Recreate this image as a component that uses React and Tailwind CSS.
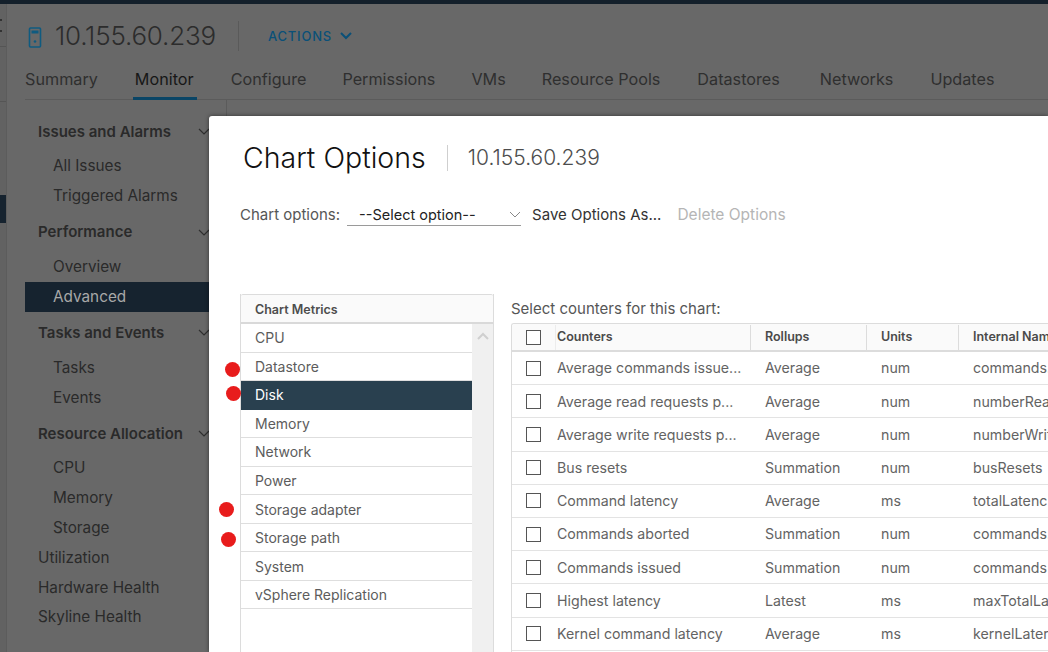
const tabs = [["Summary",false,"mr-[37px]"],["Monitor",true,"mr-[37px]"],["Configure",false,"mr-[36px]"],["Permissions",false,"mr-[36px]"],["VMs",false,"mr-[36px]"],["Resource Pools",false,"mr-[37px]"],["Datastores",false,"mr-[40px]"],["Networks",false,"mr-[37px]"],["Updates",false,"mr-[37px]"]];
const nav = [
  ["h","Issues and Alarms",1],["i","All Issues"],["i","Triggered Alarms"],
  ["h","Performance",1],["i","Overview"],["a","Advanced"],
  ["h","Tasks and Events",1],["i","Tasks"],["i","Events"],
  ["h","Resource Allocation",1],["i","CPU"],["i","Memory"],["i","Storage"],
  ["t","Utilization"],["t","Hardware Health"],["t","Skyline Health"],
];
const metrics = ["CPU","Datastore","Disk","Memory","Network","Power","Storage adapter","Storage path","System","vSphere Replication"];
const rows = [
  ["Average commands issue...","Average","num","commands."],
  ["Average read requests p...","Average","num","numberRea"],
  ["Average write requests p...","Average","num","numberWrit"],
  ["Bus resets","Summation","num","busResets"],
  ["Command latency","Average","ms","totalLatenc"],
  ["Commands aborted","Summation","num","commands."],
  ["Commands issued","Summation","num","commands"],
  ["Highest latency","Latest","ms","maxTotalLa"],
  ["Kernel command latency","Average","ms","kernelLater"],
];
const Chevron = ({c="#2f2f2f", w=1.2}) => (
  <svg width="12" height="8" viewBox="0 0 12 8" fill="none" stroke={c} strokeWidth={w}><path d="M1 1l5 5 5-5"/></svg>
);
const Dot = ({className}) => <span className={"absolute w-[15px] h-[15px] rounded-full bg-[#e81c1c] " + className}></span>;
const Box = () => <span className="w-[15px] h-[15px] border border-[#555] bg-white shrink-0"></span>;

export default function App() {
  return (
    <div className="relative w-[1048px] h-[652px] overflow-hidden bg-[#686868] text-[#2b2b2b] font-['Inter','Liberation_Sans',sans-serif] flex flex-col">
      <div className="h-[4px] bg-[#14202b] shrink-0"></div>
      <div className="flex flex-1 min-h-0">
        <div className="w-[7px] shrink-0 bg-[#626262] border-r border-[#5c5c5c] flex flex-col">
          <div className="h-[43px] border-b border-[#555] flex flex-col gap-[9px] pt-[15px]">
            <span className="w-[2px] h-[2px] bg-[#333]"></span>
            <span className="w-[2px] h-[2px] bg-[#333]"></span>
          </div>
          <div className="h-[55px] border-b border-[#555]"></div>
          <div className="h-[28px] mt-[93px] bg-[#16232f]"></div>
        </div>
        <div className="flex-1 min-w-0 flex flex-col pl-[18px]">
          <div className="flex items-center h-[64px] shrink-0">
            <svg width="14" height="21" viewBox="0 0 14 21" fill="none" className="ml-[3px] mt-[3px]">
              <rect x="1.5" y="1" width="11" height="19" rx="1" stroke="#0f5b80" strokeWidth="1.6"/>
              <rect x="3.5" y="3.5" width="7" height="3" fill="#0f5b80"/>
              <circle cx="7" cy="14.5" r="1.3" fill="#0f5b80"/>
            </svg>
            <span className="ml-[13px] text-[26px] leading-none font-light tracking-[-0.2px] text-[#2c2c2c]">10.155.60.239</span>
            <span className="ml-[22px] w-px h-[30px] bg-[#5a5a5a]"></span>
            <span className="ml-[29px] mt-[1px] text-[13px] font-medium tracking-[0.8px] text-[#0a5078]">ACTIONS</span>
            <span className="ml-[8px]"><Chevron c="#0a5078" w={2}/></span>
          </div>
          <div className="flex items-start h-[32px] border-b border-[#5b5b5b] shrink-0">
            {tabs.map(([t,a,m]) => (
              <span key={t} className={"relative text-[16.2px] leading-[22px] h-[32px] " + m + " " + (a ? "text-[#171717]" : "text-[#2f2f2f]")}>
                {t}
                {a && <span className="absolute left-[-2px] right-[-3px] bottom-[0px] h-[3px] bg-[#0a4566]"></span>}
              </span>
            ))}
          </div>
          <div className="flex flex-col w-[202px] pt-[11px] flex-1 border-r border-[#5b5b5b]">
            {nav.map(([k,t,c]) => k==="a" ? (
              <div key={t} className="h-[30px] shrink-0 bg-[#16232f] text-[#a8a8a8] text-[15.3px] pl-[28px] flex items-center">{t}</div>
            ) : k==="h" ? (
              <div key={t} className="h-[30px] shrink-0 mt-[6px] mb-[5px] flex items-center justify-between text-[15px] font-semibold text-[#2a2a2a] pl-[13px] pr-[16px]">
                <span>{t}</span>{c && <Chevron/>}
              </div>
            ) : (
              <div key={t} className={"h-[29.8px] shrink-0 flex items-center text-[15.3px] text-[#2a2a2a] " + (k==="t" ? "pl-[13px]" : "pl-[28px]")}>
                {t}
              </div>
            ))}
          </div>
        </div>
      </div>

      <div className="absolute left-[209px] top-[116px] w-[839px] h-[536px] bg-white rounded-tl-[3px] shadow-[0_0_4px_rgba(0,0,0,0.5)] flex flex-col">
        <div className="flex items-center h-[84px] pl-[34px] shrink-0">
          <span className="text-[28.5px] font-light text-[#111] leading-none">Chart Options</span>
          <span className="ml-[21px] w-px h-[26px] bg-[#cfcfcf]"></span>
          <span className="ml-[20px] text-[21px] font-light text-[#4d4d4d]">10.155.60.239</span>
        </div>
        <div className="flex items-center h-[28px] mt-[1px] pl-[31px] text-[15px] shrink-0">
          <span className="text-[#565656]">Chart options:</span>
          <span className="ml-[7px] w-[174px] h-[22px] border-b border-[#9a9a9a] flex items-center justify-between pl-[12px] text-[14.5px] text-[#222]">
            --Select option--<Chevron c="#888" w={1}/>
          </span>
          <span className="ml-[11px] text-[#333]">Save Options As...</span>
          <span className="ml-[16px] text-[15.5px] text-[#b5b5b5]">Delete Options</span>
        </div>
        <div className="flex pl-[31px] pt-[65px] flex-1 min-h-0">
          <div className="w-[254px] flex flex-col shrink-0 border-x border-[#dcdcdc]">
            <div className="h-[30px] bg-[#fafafa] border-t border-[#dcdcdc] border-b-[2px] border-b-[#d9d9d9] rounded-t-[2px] pl-[14px] pt-[3px] flex items-center text-[12.5px] font-semibold text-[#4d4d4d] shrink-0">Chart Metrics</div>
            <div className="flex flex-1 min-h-0">
              <div className="w-[231px] flex flex-col">
                {metrics.map((m) => (
                  <div key={m} className={"h-[28.55px] pl-[14px] flex items-center text-[14px] border-b shrink-0 " + (m==="Disk" ? "bg-[#29404f] text-white border-[#29404f]" : "text-[#5c5c5c] border-[#dedede]")}>{m}</div>
                ))}
              </div>
              <div className="flex-1 bg-[#f0f0f0] flex justify-center pt-[8px]">
                <svg width="12" height="8" viewBox="0 0 12 8" fill="none" stroke="#cfcfcf" strokeWidth="2"><path d="M1 7l5-5 5 5"/></svg>
              </div>
            </div>
          </div>
          <div className="ml-[17px] flex-1 min-w-0 flex flex-col">
            <div className="h-[29px] pt-[2px] flex items-center text-[15px] text-[#565656] shrink-0">Select counters for this chart:</div>
            <div className="border-l border-t border-[#dcdcdc] rounded-tl-[3px] flex-1 min-h-0 overflow-hidden">
              <div className="flex h-[28px] pt-[1px] bg-[#fafafa] border-b-[2px] border-[#dcdcdc] text-[12.5px] font-semibold text-[#4a4a4a] items-center">
                <span className="w-[44px] pl-[14px] flex items-center h-full border-r border-[#ececec] shrink-0"><Box/></span>
                <span className="w-[195px] shrink-0 h-full flex items-center border-r border-[#dcdcdc] pl-[1px]">Counters</span>
                <span className="w-[116px] shrink-0 h-full flex items-center pl-[14px] border-r border-[#dcdcdc]">Rollups</span>
                <span className="w-[92px] shrink-0 h-full flex items-center pl-[14px] border-r border-[#dcdcdc]">Units</span>
                <span className="pl-[14px] whitespace-nowrap">Internal Name</span>
              </div>
              {rows.map((r) => (
                <div key={r[0]} className="flex h-[33.2px] items-center border-b border-[#e3e3e3] text-[14.2px] text-[#636363] whitespace-nowrap">
                  <span className="w-[44px] pl-[14px] flex items-center shrink-0"><Box/></span>
                  <span className="w-[195px] shrink-0 pl-[1px]">{r[0]}</span>
                  <span className="w-[116px] shrink-0 pl-[14px]">{r[1]}</span>
                  <span className="w-[92px] shrink-0 pl-[14px]">{r[2]}</span>
                  <span className="pl-[14px]">{r[3]}</span>
                </div>
              ))}
            </div>
          </div>
        </div>
      </div>

      <Dot className="left-[225px] top-[362px]"/>
      <Dot className="left-[226px] top-[386px]"/>
      <Dot className="left-[219px] top-[502px]"/>
      <Dot className="left-[221px] top-[532px]"/>
    </div>
  );
}
